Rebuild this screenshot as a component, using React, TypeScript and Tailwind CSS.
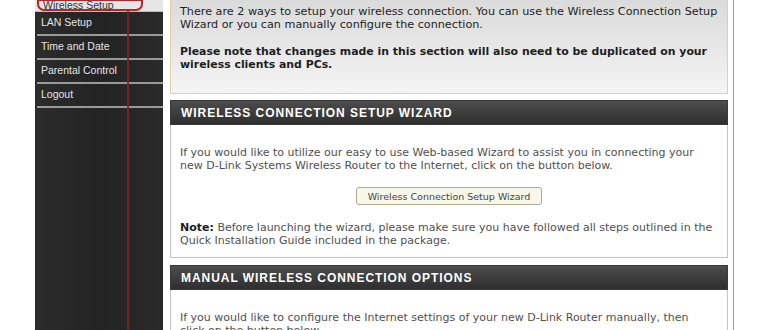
const menu = ['LAN Setup', 'Time and Date', 'Parental Control', 'Logout']

const sans = {fontFamily: '"Liberation Sans", Arial, sans-serif'}
const tahoma = {fontFamily: '"DejaVu Sans", Verdana, sans-serif'}

const SectionHeader = ({title}: { title: string }) => (
  <div
    className="h-[25px] flex items-center pl-[10px] bg-gradient-to-b from-[#4d4d4d] to-[#2f2f2f] border border-[#3a3a3a] text-white font-bold text-[12px] tracking-[0.95px]"
    style={sans}>
    {title}
  </div>
)

const Lines = ({lines}: { lines: React.ReactNode[] }) => (
  <div>
    {lines.map((l, i) => <div key={i} className="whitespace-nowrap">{l}</div>)}
  </div>
)

export default function App() {
  return (
    <div className="w-[770px] h-[330px] overflow-hidden bg-white flex" style={tahoma}>
      <div className="w-[35px] shrink-0"/>

      {/* left menu */}
      <div className="w-[128px] shrink-0 relative bg-[#272727] bg-gradient-to-r from-[#2c2c2c] via-[#232323] to-[#2a2a2a]"
           style={sans}>
        <div className="h-[13px] bg-[#e6e6e6] pl-[2px] pr-[20px] border-b border-[#bdbdbd]">
          <div
            className="h-[12px] -mt-[1px] border-2 border-[#b3262a] rounded-b-[7px] text-[10.5px] leading-[9px] pl-[4px] text-[#333]">
            Wireless Setup
          </div>
        </div>
        {menu.map(m => (
          <div key={m}
               className="h-[24px] ml-[2px] flex items-center pl-[4px] text-[10.5px] text-[#e4e4e4] border-b-2 border-[#9a9a9a]">
            {m}
          </div>
        ))}
        <div className="absolute top-[11px] bottom-0 left-[92px] w-[2px] bg-[#7c2422] opacity-90"/>
      </div>

      <div className="w-[7px] shrink-0"/>

      {/* content */}
      <div className="w-[558px] shrink-0 flex flex-col -mt-[8px]">
        <div
          className="border border-[#e3cfa6] bg-gradient-to-b from-[#d9d9d9] via-[#e6e6e6] to-[#f4f4f4] pt-[12px] pb-[22px] px-[9px] text-[11.2px] leading-[13px] text-[#1e1e1e]">
          <Lines lines={[
            'There are 2 ways to setup your wireless connection. You can use the Wireless Connection Setup',
            'Wizard or you can manually configure the connection.',
          ]}/>
          <div className="mt-[14px] font-bold text-[10.9px]">
            <Lines lines={[
              'Please note that changes made in this section will also need to be duplicated on your',
              'wireless clients and PCs.',
            ]}/>
          </div>
        </div>

        <div className="mt-[6px]">
          <SectionHeader title="WIRELESS CONNECTION SETUP WIZARD"/>
          <div
            className="border border-t-0 border-[#c4c4c4] bg-white pt-[21px] pb-[10px] px-[9px] text-[11px] leading-[13px] text-[#505050]">
            <Lines lines={[
              'If you would like to utilize our easy to use Web-based Wizard to assist you in connecting your',
              'new D-Link Systems Wireless Router to the Internet, click on the button below.',
            ]}/>
            <div className="flex justify-center mt-[15px]">
              <button
                className="h-[18px] w-[186px] rounded-[3px] border border-[#b1ab8e] bg-[#f7f7ea] text-[9.5px] text-[#444] whitespace-nowrap"
                style={tahoma}>
                Wireless Connection Setup Wizard
              </button>
            </div>
            <div className="mt-[16px]">
              <Lines lines={[
                <><span className="font-bold text-[#1e1e1e]">Note:</span> Before launching the wizard, please make
                  sure you have followed all steps outlined in the</>,
                'Quick Installation Guide included in the package.',
              ]}/>
            </div>
          </div>
        </div>

        <div className="mt-[7px]">
          <SectionHeader title="MANUAL WIRELESS CONNECTION OPTIONS"/>
          <div
            className="border border-t-0 border-[#c4c4c4] bg-white pt-[21px] pb-[10px] px-[9px] text-[11px] leading-[13px] text-[#505050]">
            <Lines lines={[
              'If you would like to configure the Internet settings of your new D-Link Router manually, then',
              'click on the button below.',
            ]}/>
          </div>
        </div>
      </div>

      <div className="w-[5px] shrink-0"/>
      <div className="w-px shrink-0 bg-[#9c9c9c]"/>
    </div>
  )
}
